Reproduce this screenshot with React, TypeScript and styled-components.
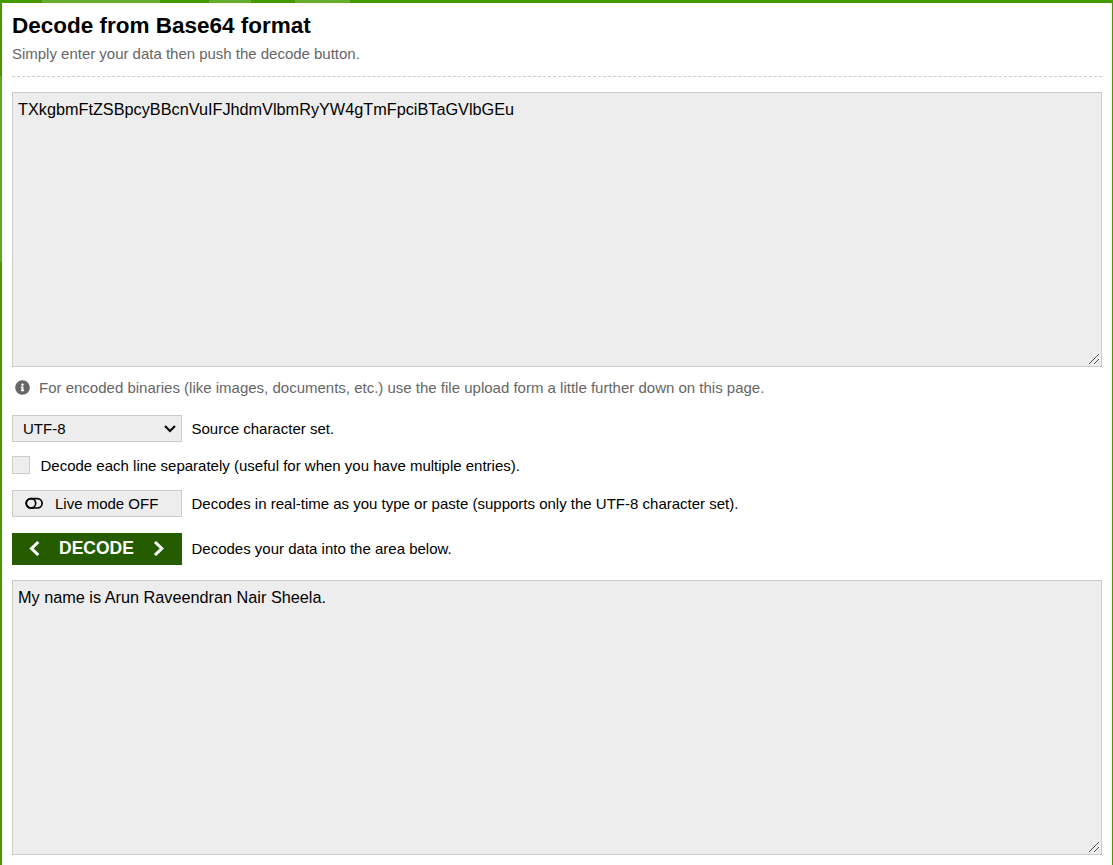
import React from "react";
import styled, { createGlobalStyle } from "styled-components";
import { FaInfoCircle } from "react-icons/fa";

const GlobalStyle = createGlobalStyle`
  * { box-sizing: border-box; }
  html, body, #root { height: 100%; }
  body {
    margin: 0;
    overflow: hidden;
    background: #459a00;
    font-family: "Liberation Sans", Arial, sans-serif;
    font-size: 15px;
    color: #000;
  }
`;

const Page = styled.div`
  height: 865px;
  padding: 3px 1px 0 2px;
  background:
    linear-gradient(#66ad2e, #66ad2e) 42px 0 / 118px 3px no-repeat,
    linear-gradient(#66ad2e, #66ad2e) 209px 0 / 42px 3px no-repeat,
    linear-gradient(#66ad2e, #66ad2e) 295px 0 / 55px 3px no-repeat,
    linear-gradient(#5da823, #5da823) 0 76px / 2px 186px no-repeat,
    #459a00;
`;

const Panel = styled.main`
  height: 100%;
  padding: 9px 10px 0;
  background: #fff;
  display: flex;
  flex-direction: column;
`;

const Title = styled.h1`
  margin: 0;
  font-size: 22.5px;
  line-height: 28px;
`;

const Subtitle = styled.p`
  margin: 0 0 15px;
  padding: 4px 0 12px;
  line-height: 20px;
  letter-spacing: -0.015px;
  color: #666;
  border-bottom: 1px dashed #ccc;
`;

const TextBox = styled.div`
  position: relative;
  flex: none;
  height: 275px;
  padding: 6px 5px;
  border: 1px solid #ccc;
  background: #ededed;
  font-size: 16.25px;
  line-height: 20px;
`;

const Grip = styled.svg`
  position: absolute;
  right: 1px;
  bottom: 1px;
`;

const Hint = styled.p`
  display: flex;
  align-items: center;
  gap: 9px;
  height: 20px;
  margin: 10px 0 18px;
  padding-left: 3px;
  color: #666;
`;

const Row = styled.div<{ $height: number; $after: number; $gap?: number }>`
  display: flex;
  flex: none;
  align-items: center;
  gap: ${(p) => p.$gap ?? 9.5}px;
  height: ${(p) => p.$height}px;
  margin-bottom: ${(p) => p.$after}px;
`;

const Label = styled.span<{ $lift?: number }>`
  padding-bottom: ${(p) => p.$lift ?? 0}px;
`;

const Control = styled.div`
  display: flex;
  align-items: center;
  width: 170px;
  height: 27px;
  padding: 0 4px 0 10px;
  border: 1px solid #ccc;
  background: #ededed;
`;

const SelectBox = styled(Control)`
  justify-content: space-between;
`;

const LiveButton = styled(Control)`
  gap: 12px;
  padding-left: 12px;
`;

const Checkbox = styled.span`
  width: 18px;
  height: 18px;
  border: 1px solid #ccc;
  background: #ededed;
`;

const DecodeButton = styled.div`
  display: flex;
  align-items: center;
  justify-content: space-between;
  width: 170px;
  height: 32px;
  padding: 0 17px 2px 16px;
  background: #265c00;
  color: #fff;
  font-size: 17.5px;
  font-weight: bold;
`;

function ResizeGrip() {
  return (
    <Grip width="12" height="12" viewBox="0 0 12 12" shapeRendering="crispEdges">
      <path d="M1 11L11 1M6 11L11 6" stroke="#555" fill="none" />
    </Grip>
  );
}

function Chevron({ right = false }: { right?: boolean }) {
  return (
    <svg width="12" height="16" viewBox="0 0 12 16" fill="none" stroke="#fff" strokeWidth="3">
      <path d={right ? "M2 2L8.8 8.5L2 15" : "M10.3 2L3.5 8.5L10.3 15"} />
    </svg>
  );
}

export default function App() {
  return (
    <>
      <GlobalStyle />
      <Page>
        <Panel>
          <Title>Decode from Base64 format</Title>
          <Subtitle>Simply enter your data then push the decode button.</Subtitle>
          <TextBox>
            TXkgbmFtZSBpcyBBcnVuIFJhdmVlbmRyYW4gTmFpciBTaGVlbGEu
            <ResizeGrip />
          </TextBox>
          <Hint>
            <FaInfoCircle size={15} />
            For encoded binaries (like images, documents, etc.) use the file upload form a little further down on this page.
          </Hint>
          <Row $height={27} $after={14}>
            <SelectBox>
              UTF-8
              <svg width="14" height="10" viewBox="0 0 14 10" fill="none" stroke="#000" strokeWidth="2">
                <path d="M2 2L7 7L12 2" />
              </svg>
            </SelectBox>
            <Label>Source character set.</Label>
          </Row>
          <Row $height={18} $after={16} $gap={10.5}>
            <Checkbox />
            <Label>Decode each line separately (useful for when you have multiple entries).</Label>
          </Row>
          <Row $height={27} $after={16}>
            <LiveButton>
              <svg width="18" height="13" viewBox="0 0 18 13" fill="none" stroke="#000" strokeWidth="1.7">
                <rect x="1.1" y="1.6" width="16" height="9.4" rx="4.7" />
                <circle cx="6" cy="6.3" r="4.7" />
              </svg>
              Live mode OFF
            </LiveButton>
            <Label>Decodes in real-time as you type or paste (supports only the UTF-8 character set).</Label>
          </Row>
          <Row $height={32} $after={15}>
            <DecodeButton>
              <Chevron />
              DECODE
              <Chevron right />
            </DecodeButton>
            <Label $lift={1}>Decodes your data into the area below.</Label>
          </Row>
          <TextBox>
            My name is Arun Raveendran Nair Sheela.
            <ResizeGrip />
          </TextBox>
        </Panel>
      </Page>
    </>
  );
}
